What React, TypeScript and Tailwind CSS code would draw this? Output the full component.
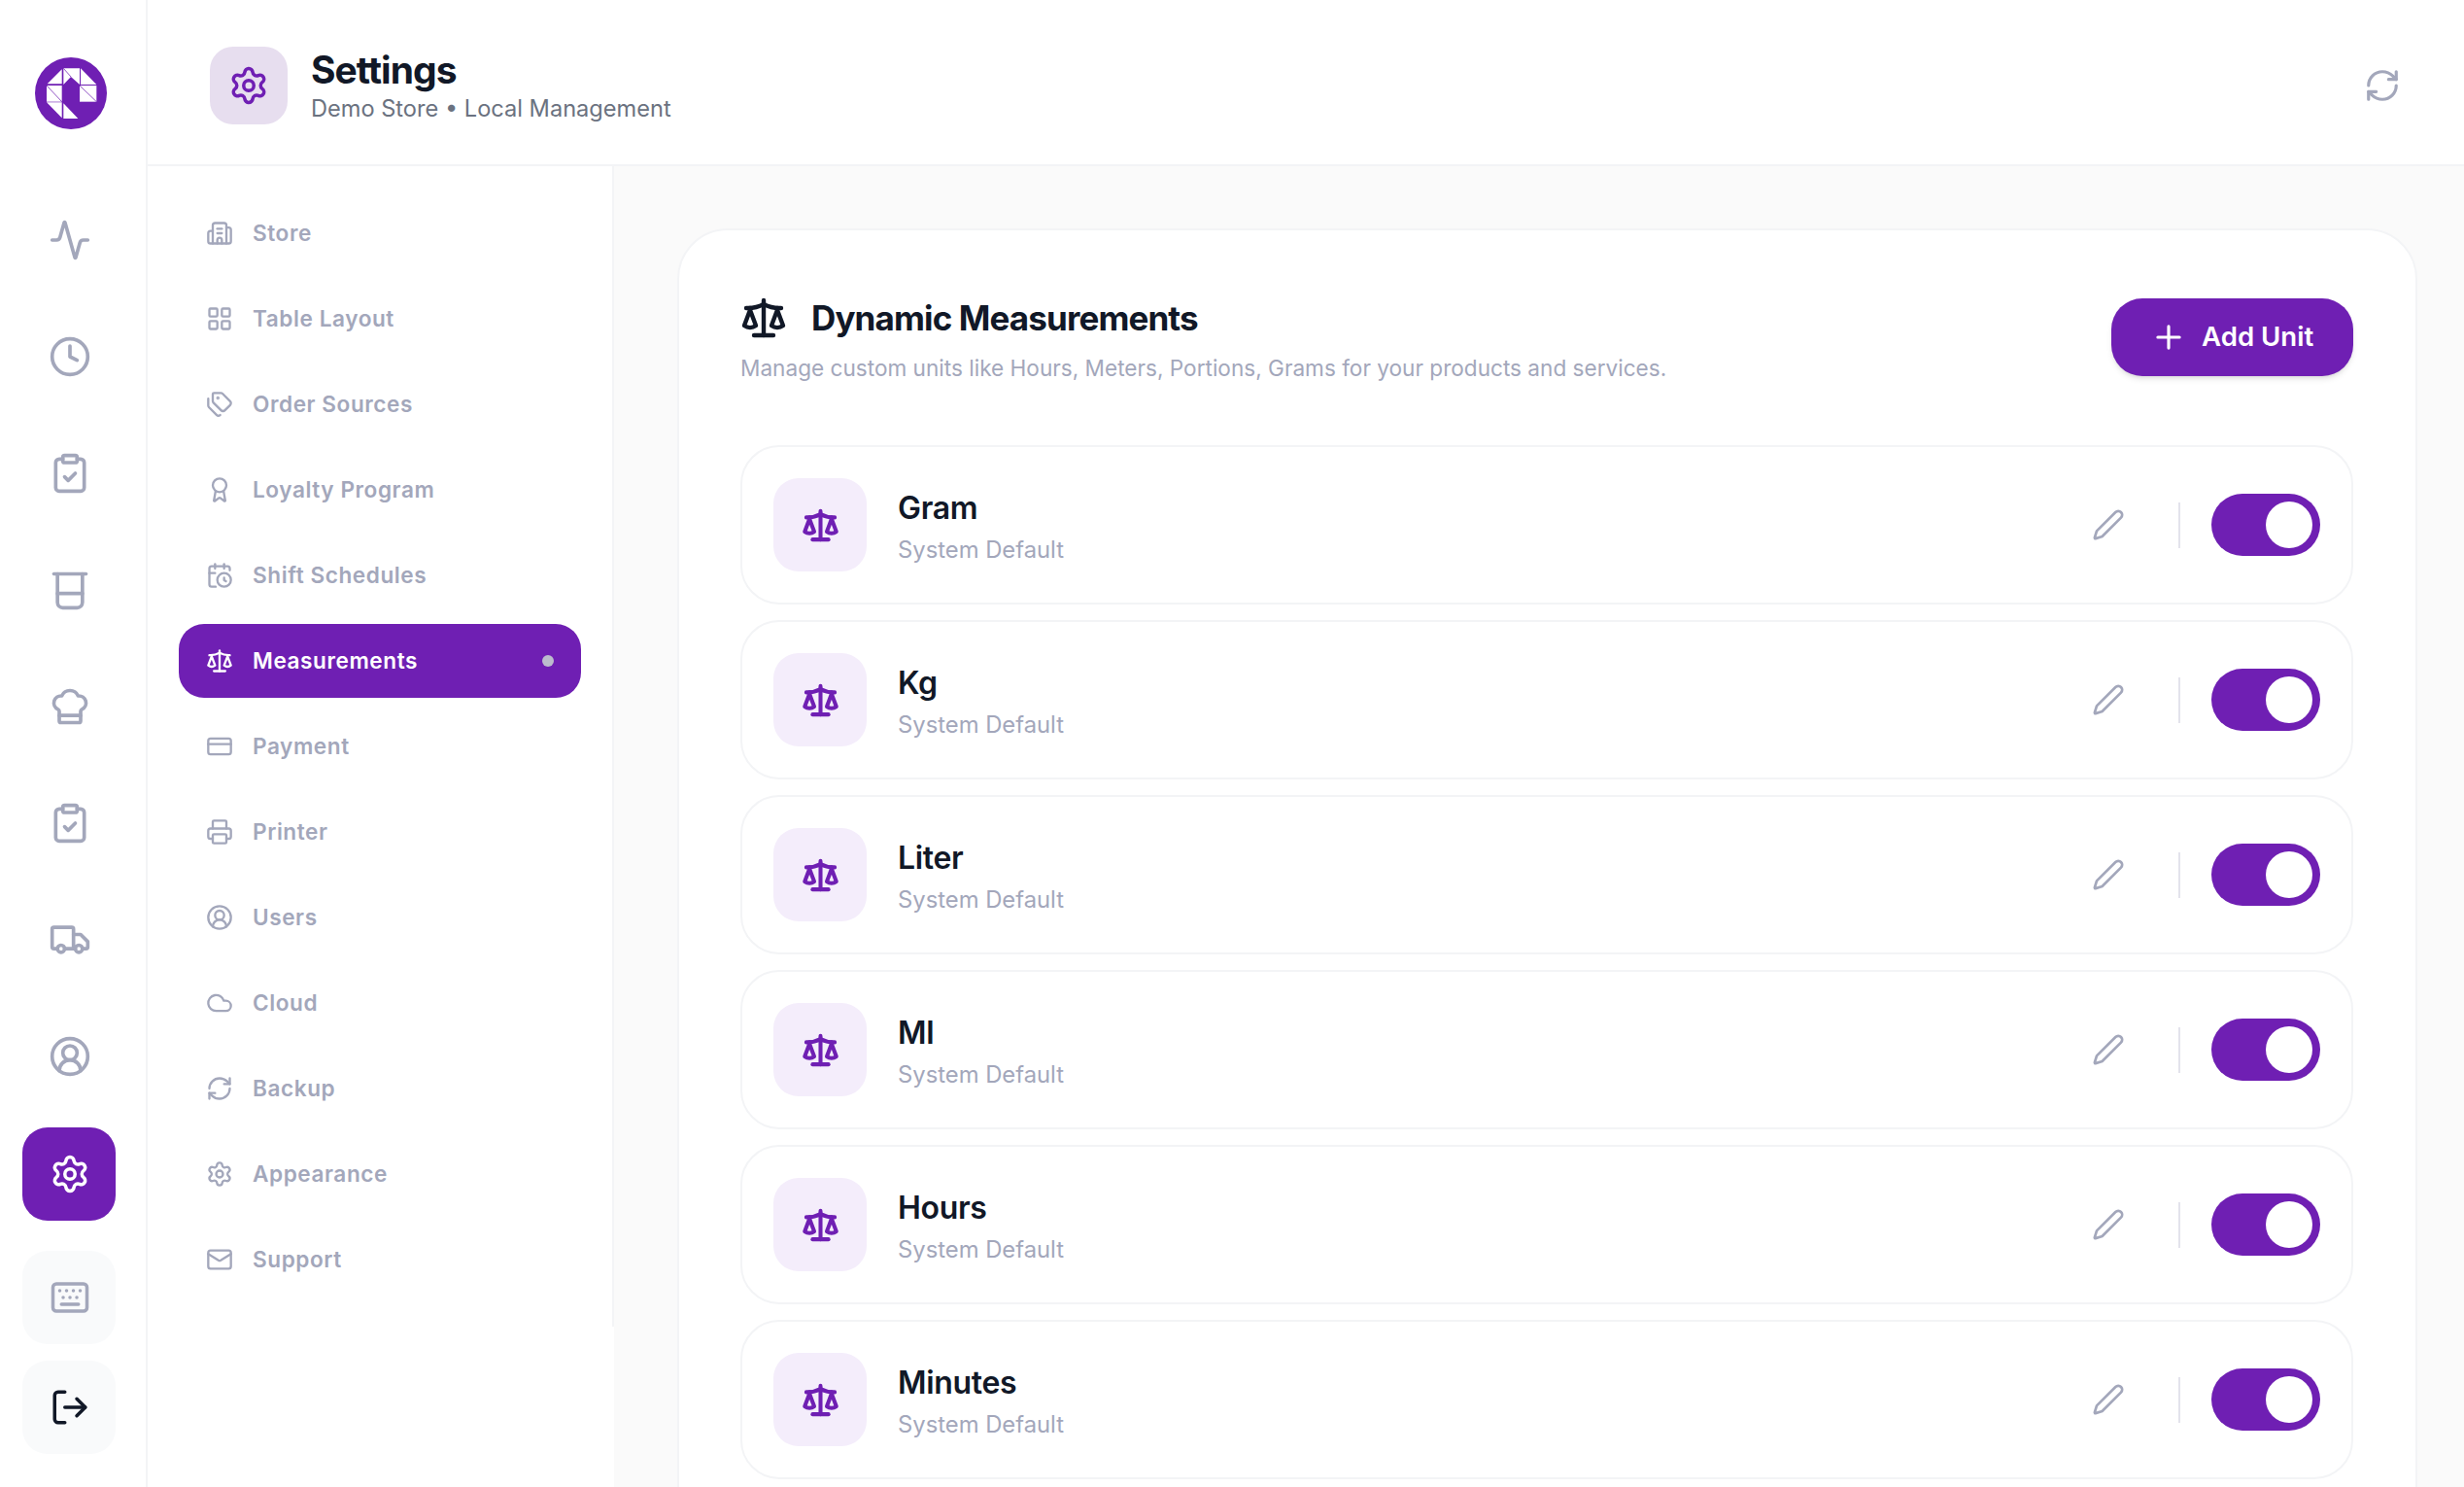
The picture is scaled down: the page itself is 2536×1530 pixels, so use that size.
import {
  Activity,
  Award,
  Building2,
  CalendarClock,
  ChefHat,
  CircleUserRound,
  ClipboardCheck,
  Clock,
  Cloud,
  CreditCard,
  Keyboard,
  LayoutGrid,
  LogOut,
  Mail,
  Pen,
  Plus,
  Printer,
  RefreshCw,
  Scale,
  Settings,
  Tags,
} from "lucide-react";

const PURPLE = "#6f1fb3";

function Logo() {
  return (
    <svg viewBox="0 0 222 222" className="w-[74px] h-[74px] ml-[4px] shrink-0">
      <circle cx="111" cy="111" r="111" fill={PURPLE} />
      <g fill="#ffffff">
        <polygon points="83,37 83,82 38,82" />
        <polygon points="88,34 138,34 138,84 111,60 88,84" />
        <polygon points="141,34 190,84 141,84" />
        <rect x="138" y="87" width="52" height="50" />
        <rect x="36" y="87" width="47" height="50" />
        <polygon points="36,139 83,139 83,187" />
        <polygon points="88,142 133,189 88,189" />
      </g>
      <g stroke={PURPLE} strokeWidth="3" fill="none" opacity="0.75">
        <line x1="88" y1="34" x2="111" y2="60" />
        <line x1="138" y1="87" x2="190" y2="137" />
        <line x1="36" y1="87" x2="83" y2="137" />
      </g>
    </svg>
  );
}

// the glass in the rail, lucide has no plain one
function Glass(props: any) {
  return (
    <svg viewBox="0 0 24 24" fill="none" stroke="currentColor" strokeWidth="2" strokeLinecap="round" strokeLinejoin="round" {...props}>
      <path d="M3 3h18" />
      <path d="M5 3v16a3 3 0 0 0 3 3h8a3 3 0 0 0 3-3V3" />
      <path d="M5 14h14" />
    </svg>
  );
}

function Truck2(props: any) {
  return (
    <svg viewBox="0 0 24 24" fill="none" stroke="currentColor" strokeWidth="2" strokeLinecap="round" strokeLinejoin="round" {...props}>
      <path d="M5 17H3a1 1 0 0 1-1-1V6a1 1 0 0 1 1-1h10a1 1 0 0 1 1 1v11H9" />
      <path d="M14 9h4l4 4v3a1 1 0 0 1-1 1h-2" />
      <path d="M15 17h-1" />
      <circle cx="7" cy="17" r="2" />
      <circle cx="17" cy="17" r="2" />
    </svg>
  );
}

const railIcons = [Activity, Clock, ClipboardCheck, Glass, ChefHat, ClipboardCheck, Truck2, CircleUserRound];

function RailButton({ icon: Icon, tone }: any) {
  return (
    <div className={`w-[96px] h-[96px] rounded-[26px] flex items-center justify-center pl-[2px] ${tone}`}>
      <Icon className="w-[42px] h-[42px]" strokeWidth={2} />
    </div>
  );
}

function Rail() {
  return (
    <aside className="w-[152px] shrink-0 h-full bg-white border-r-2 border-[#f3f4f6] flex flex-col items-center pt-[59px] pr-[8px]">
      <Logo />
      <div className="mt-[92px] ml-[2px] flex flex-col items-center gap-[76px] text-[#a3a7bb]">
        {railIcons.map((Icon: any, i) => (
          <Icon key={i} className="w-[44px] h-[44px]" strokeWidth={2} />
        ))}
      </div>
      <div className="mt-[51px]">
        <RailButton icon={Settings} tone="bg-[#6f1fb3] text-white" />
      </div>
      <div className="mt-[31px]">
        <RailButton icon={Keyboard} tone="bg-[#f9fafb] text-[#a3a7bb]" />
      </div>
      <div className="mt-[17px]">
        <RailButton icon={LogOut} tone="bg-[#f9fafb] text-[#111827]" />
      </div>
    </aside>
  );
}

const navItems = [
  { label: "Store", icon: Building2 },
  { label: "Table Layout", icon: LayoutGrid },
  { label: "Order Sources", icon: Tags },
  { label: "Loyalty Program", icon: Award },
  { label: "Shift Schedules", icon: CalendarClock },
  { label: "Measurements", icon: Scale, active: true },
  { label: "Payment", icon: CreditCard },
  { label: "Printer", icon: Printer },
  { label: "Users", icon: CircleUserRound },
  { label: "Cloud", icon: Cloud },
  { label: "Backup", icon: RefreshCw },
  { label: "Appearance", icon: Settings },
  { label: "Support", icon: Mail },
];

function SubNav() {
  return (
    <nav className="w-[480px] shrink-0 h-full bg-white">
      <div className="h-[1194px] border-r-2 border-[#f3f4f6] pt-[31px] pl-[32px] pr-[32px] flex flex-col gap-[12px]">
        {navItems.map((item) => {
          const Icon = item.icon;
          return (
            <div
              key={item.label}
              className={`h-[76px] shrink-0 rounded-[26px] flex items-center pl-[28px] pr-[28px] ${
                item.active ? "bg-[#6f1fb3] text-white" : "text-[#a3a7bb]"
              }`}
            >
              <Icon className="w-[28px] h-[28px] shrink-0" strokeWidth={2} />
              <span className="ml-[20px] text-[22.6px] font-semibold tracking-[0.025em]">{item.label}</span>
              {item.active && <span className="ml-auto w-[12px] h-[12px] rounded-full bg-[#bcbccd]" />}
            </div>
          );
        })}
      </div>
    </nav>
  );
}

const units = ["Gram", "Kg", "Liter", "Ml", "Hours", "Minutes"];

function UnitRow({ name }: { name: string }) {
  return (
    <div className="h-[164px] shrink-0 rounded-[40px] border-2 border-[#f3f4f6] bg-white flex items-center pl-[32px] pr-[32px]">
      <div className="w-[96px] h-[96px] rounded-[26px] bg-[#f4edfb] text-[#6f1fb3] flex items-center justify-center">
        <Scale className="w-[39px] h-[39px]" strokeWidth={2.5} />
      </div>
      <div className="ml-[32px] pt-[5px] flex flex-col">
        <span className="text-[32px] leading-[44px] font-semibold text-[#111827] tracking-[-0.01em]">{name}</span>
        <span className="mt-[3px] text-[23.8px] leading-[36px] text-[#a3a7bb]">System Default</span>
      </div>
      <Pen className="ml-auto w-[34px] h-[34px] text-[#a3a7bb]" strokeWidth={1.9} />
      <div className="ml-[55px] w-[2px] h-[47px] bg-[#e3e3ec]" />
      <div className="ml-[32px] w-[112px] h-[64px] rounded-full bg-[#6f1fb3] flex items-center justify-end p-[8px]">
        <div className="w-[48px] h-[48px] rounded-full bg-white" />
      </div>
    </div>
  );
}

export default function App() {
  return (
    <div className="w-[2536px] h-[1530px] overflow-hidden flex bg-white font-['Inter',sans-serif]">
      <Rail />
      <div className="flex-1 min-w-0 flex flex-col">
        <header className="h-[171px] shrink-0 bg-white border-b-2 border-[#f3f4f6] flex items-center pt-[7px] pl-[64px] pr-[65px]">
          <div className="w-[80px] h-[80px] rounded-[24px] bg-[#e7deef] text-[#6f1fb3] flex items-center justify-center">
            <Settings className="w-[42px] h-[42px]" strokeWidth={2} />
          </div>
          <div className="ml-[24px] flex flex-col">
            <span className="text-[39px] leading-[48px] font-bold tracking-[-0.025em] text-[#111827]">Settings</span>
            <span className="text-[23.6px] leading-[32px] text-[#6b7280]">Demo Store • Local Management</span>
          </div>
          <RefreshCw className="ml-auto w-[38px] h-[38px] text-[#a3a7bb]" strokeWidth={2} />
        </header>
        <div className="flex-1 min-h-0 flex">
          <SubNav />
          <main className="flex-1 min-w-0 bg-[#fafafa] pt-[64px] pl-[65px] pr-[48px] overflow-hidden">
            <section className="rounded-t-[52px] border-2 border-[#f3f4f6] bg-white pt-[70px] pl-[63px] pr-[64px] pb-[32px]">
              <div className="flex items-start justify-between">
                <div className="flex flex-col -mt-[4px]">
                  <div className="flex items-center gap-[25px]">
                    <Scale className="w-[48px] h-[48px] text-[#111827]" strokeWidth={2.2} />
                    <h2 className="text-[35px] leading-[48px] font-bold tracking-[-0.025em] text-[#111827]">
                      Dynamic Measurements
                    </h2>
                  </div>
                  <p className="mt-[12px] text-[22.6px] leading-[32px] text-[#a3a7bb]">
                    Manage custom units like Hours, Meters, Portions, Grams for your products and services.
                  </p>
                </div>
                <button className="w-[249px] h-[80px] rounded-[32px] bg-[#6f1fb3] text-white shadow-md flex items-center pl-[40px]">
                  <Plus className="w-[38px] h-[38px]" strokeWidth={2} />
                  <span className="ml-[15px] text-[27.6px] font-semibold">Add Unit</span>
                </button>
              </div>
              <div className="mt-[63px] flex flex-col gap-[16px]">
                {units.map((u) => (
                  <UnitRow key={u} name={u} />
                ))}
              </div>
            </section>
          </main>
        </div>
      </div>
    </div>
  );
}
